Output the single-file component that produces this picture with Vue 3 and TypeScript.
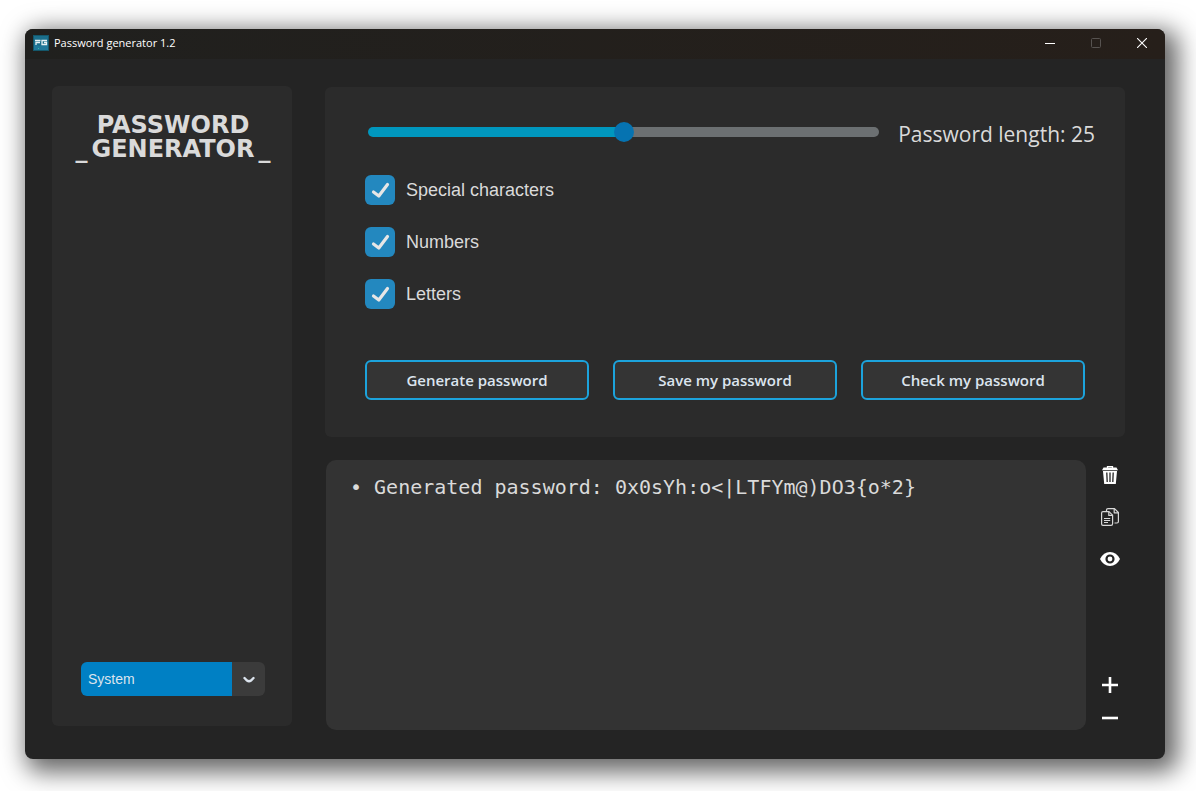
<script setup lang="ts">
import { computed, reactive, ref } from 'vue'

interface CharacterSet {
  id: string
  label: string
  enabled: boolean
}

const minLength = 0
const maxLength = 50
const length = ref<number>(25)
const theme = ref<string>('System')
const themes: string[] = ['System', 'Light', 'Dark']
const output = ref<string>('• Generated password: 0x0sYh:o<|LTFYm@)DO3{o*2}')

const sets = reactive<CharacterSet[]>([
  { id: 'special', label: 'Special characters', enabled: true },
  { id: 'numbers', label: 'Numbers', enabled: true },
  { id: 'letters', label: 'Letters', enabled: true },
])

const fill = computed<string>(
  () => `${((length.value - minLength) / (maxLength - minLength)) * 100}%`,
)
</script>

<template>
  <div class="desktop">
    <div class="window">
      <header class="titlebar">
        <svg class="app-icon" viewBox="0 0 16 16" aria-hidden="true">
          <rect width="16" height="16" fill="#14576b" />
          <rect x="1" y="1" width="14" height="14" fill="#1b6f8c" />
          <path d="M1 15V9l5 2 9-2v6z" fill="#20789a" />
          <path d="M2 5.500H7.500M3 10V7.500H7M14 5.500H9V9.500H13.500V7.500H11" fill="none" stroke="#e6f1f4" stroke-width="1.300" />
          <rect x="5" y="13" width="1" height="1" fill="#35b9a5" />
        </svg>
        <h1 class="title">Password generator 1.2</h1>
        <div class="controls">
          <button class="control" type="button" aria-label="Minimize">
            <svg viewBox="0 0 10 10"><path d="M0 5.500H10" stroke="#fff" fill="none" /></svg>
          </button>
          <button class="control" type="button" aria-label="Maximize" disabled>
            <svg viewBox="0 0 10 10"><rect x=".5" y=".5" width="9" height="9" rx="1" stroke="#575350" fill="none" /></svg>
          </button>
          <button class="control" type="button" aria-label="Close">
            <svg viewBox="0 0 10 10"><path d="M0 0L10 10M10 0L0 10" stroke="#fff" stroke-width="1.100" fill="none" /></svg>
          </button>
        </div>
      </header>

      <div class="content">
        <aside class="sidebar">
          <div class="logo">
            <div class="logo-line">PASSWORD</div>
            <div class="logo-line"><span>_</span><span>GENERATOR</span><span>_</span></div>
          </div>
          <div class="theme">
            <select v-model="theme" class="theme-select" aria-label="Appearance">
              <option v-for="name in themes" :key="name" :value="name">{{ name }}</option>
            </select>
            <svg class="theme-arrow" viewBox="0 0 12 8" aria-hidden="true">
              <path d="M1.500 2L4 4.500Q6 6 8 4.500L10.500 2" fill="none" stroke="#dce4ee" stroke-width="2.400" stroke-linecap="round" />
            </svg>
          </div>
        </aside>

        <main class="main">
          <section class="settings">
            <div class="length-row">
              <input
                id="length"
                v-model.number="length"
                class="slider"
                type="range"
                :min="minLength"
                :max="maxLength"
                :style="{ '--fill': fill }"
              />
              <label class="length-label" for="length">Password length: {{ length }}</label>
            </div>

            <div class="checks">
              <label v-for="set in sets" :key="set.id" class="check" :for="set.id">
                <span class="check-box">
                  <input :id="set.id" v-model="set.enabled" type="checkbox" />
                  <svg viewBox="0 0 30 30" aria-hidden="true">
                    <path d="M8.500 17L13.800 21L22.500 9.500" fill="none" stroke="#e6e6e6" stroke-width="3.200" stroke-linecap="round" stroke-linejoin="round" />
                  </svg>
                </span>
                <span>{{ set.label }}</span>
              </label>
            </div>

            <div class="actions">
              <button class="action" type="button">Generate password</button>
              <button class="action" type="button">Save my password</button>
              <button class="action" type="button">Check my password</button>
            </div>
          </section>

          <section class="result">
            <textarea v-model="output" class="output" aria-label="Output" readonly spellcheck="false"></textarea>
            <div class="tools">
              <button class="tool" type="button" aria-label="Clear">
                <svg viewBox="0 0 24 24">
                  <path d="M9.500 5V3.700H14.500V5" fill="none" stroke="#fff" stroke-width="1.300" />
                  <path d="M5.500 4.500H18.500L20 7.200H4Z" fill="#fff" />
                  <path d="M5 8H19L17.800 21H6.200Z" fill="#fff" />
                  <path d="M8.800 9.500L9.200 19M12 9.500V19M15.200 9.500L14.800 19" stroke="#242424" stroke-width="1.300" fill="none" />
                </svg>
              </button>
              <button class="tool" type="button" aria-label="Copy">
                <svg viewBox="0 0 24 24" fill="none" stroke="#d8d8d8" stroke-width="1.200" stroke-linejoin="round">
                  <path d="M8.500 6V5Q8.500 3.600 10 3.600H16.500L20.400 7.500V16.500Q20.400 18 19 18H16.500" />
                  <path d="M16.200 3.800V7.800H20.200" />
                  <path d="M5 6.600H11L14.600 10.200V18.800Q14.600 20.400 13 20.400H5Q3.600 20.400 3.600 19V8Q3.600 6.600 5 6.600Z" />
                  <path d="M10.800 6.800V10.400H14.400M6 13.500H12.200M6 15.500H12.200M6 17.500H10" />
                </svg>
              </button>
              <button class="tool" type="button" aria-label="Show or hide">
                <svg viewBox="0 0 24 24">
                  <path d="M2 12Q5.500 5 12 5T22 12Q18.500 19 12 19T2 12Z" fill="#fff" />
                  <circle cx="12" cy="12" r="3.500" fill="#fff" stroke="#242424" stroke-width="2.200" />
                </svg>
              </button>
              <div class="zoom-tools">
                <button class="tool" type="button" aria-label="Larger text">
                  <svg viewBox="0 0 24 24"><path d="M4 12H20M12 4V20" stroke="#fff" stroke-width="2.600" /></svg>
                </button>
                <button class="tool" type="button" aria-label="Smaller text">
                  <svg viewBox="0 0 24 24"><path d="M4 12H20" stroke="#fff" stroke-width="2.600" /></svg>
                </button>
              </div>
            </div>
          </section>
        </main>
      </div>
    </div>
  </div>
</template>

<style>
body {
  margin: 0;
  background: #fff;
}
</style>

<style scoped>
* {
  box-sizing: border-box;
}

button,
input,
select,
textarea {
  margin: 0;
  font: inherit;
}

button {
  padding: 0;
  border: 0;
  background: none;
  color: inherit;
}

svg {
  display: block;
}

.desktop {
  display: flex;
  min-height: 100vh;
  padding: 29px 31px 32px 25px;
  background: #fff;
  font-family: "Open Sans", "Noto Sans", sans-serif;
  overflow: hidden;
}

.window {
  display: flex;
  flex: 1;
  flex-direction: column;
  border-radius: 8px;
  background: #242424;
  color: #dadada;
  box-shadow: 7px 7px 24px 6px rgba(0, 0, 0, 0.6);
}

.titlebar {
  display: flex;
  align-items: center;
  height: 30px;
  padding: 0 0 2px 8px;
  border-radius: 8px 8px 0 0;
  background: linear-gradient(90deg, #20201e, #261f1a);
}

.app-icon {
  width: 16px;
  height: 16px;
}

.title {
  flex: 1;
  margin: 0 0 0 5px;
  color: #fff;
  font-size: 11px;
  font-weight: 400;
  line-height: 16px;
}

.controls {
  display: flex;
}

.control {
  display: grid;
  width: 46px;
  height: 28px;
  place-items: center;
}

.control svg {
  width: 10px;
  height: 10px;
}

.content {
  display: flex;
  flex: 1;
  gap: 33px;
  padding: 27px 40px 29px 27px;
}

.sidebar {
  display: flex;
  flex-direction: column;
  justify-content: space-between;
  width: 240px;
  margin-bottom: 4px;
  padding: 27px 18px 30px 20px;
  border-radius: 6px;
  background: #2b2b2b;
}

.logo {
  color: #dadada;
  font-family: "DejaVu Sans", sans-serif;
  font-size: 24px;
  font-weight: 700;
  line-height: 24px;
}

.logo-line {
  display: flex;
  justify-content: center;
  gap: 4px;
}

.theme {
  position: relative;
  width: 184px;
  margin-left: 9px;
}

.theme-select {
  display: block;
  width: 100%;
  height: 34px;
  padding: 0 40px 0 7px;
  border: 0;
  border-radius: 6px;
  appearance: none;
  background: linear-gradient(#3b3b3b, #3b3b3b) right / 33px 100% no-repeat #0080c4;
  color: #dce4ee;
  font-family: "Liberation Sans", sans-serif;
  font-size: 14px;
}

.theme-arrow {
  position: absolute;
  top: 14px;
  right: 10px;
  width: 12px;
  height: 8px;
  pointer-events: none;
}

.main {
  display: flex;
  flex: 1;
  flex-direction: column;
  gap: 23px;
  min-width: 0;
  padding-top: 1px;
}

.settings {
  padding: 30px 40px 37px;
  border-radius: 6px;
  background: #2b2b2b;
}

.length-row {
  display: flex;
  align-items: center;
  gap: 19px;
  height: 30px;
  margin: 0 -10px 0 3px;
}

.slider {
  flex: 1;
  min-width: 0;
  height: 10px;
  border-radius: 5px;
  appearance: none;
  background: linear-gradient(90deg, #0097be var(--fill), #6c7072 var(--fill));
}

.slider::-webkit-slider-thumb {
  width: 20px;
  height: 20px;
  border: 0;
  border-radius: 50%;
  appearance: none;
  background: #0673b1;
}

.length-label {
  padding-top: 4px;
  font-size: 21px;
  font-weight: 500;
  line-height: 30px;
  white-space: nowrap;
}

.checks {
  display: flex;
  flex-direction: column;
  align-items: flex-start;
  gap: 22px;
  margin-top: 28px;
  font-family: "Liberation Sans", sans-serif;
  font-size: 18px;
}

.check {
  display: flex;
  align-items: center;
  gap: 11px;
}

.check-box {
  display: grid;
  width: 30px;
  height: 30px;
}

.check-box > * {
  grid-area: 1 / 1;
}

.check-box input {
  width: 30px;
  height: 30px;
  border-radius: 6px;
  appearance: none;
  background: #444;
}

.check-box input:checked {
  background: #2388bf;
}

.check-box svg {
  z-index: 1;
  visibility: hidden;
  pointer-events: none;
}

.check-box input:checked + svg {
  visibility: visible;
}

.actions {
  display: grid;
  grid-template-columns: repeat(3, 1fr);
  gap: 24px;
  margin-top: 51px;
}

.action {
  height: 40px;
  border: 2px solid #1ca3dc;
  border-radius: 6px;
  background: #343434;
  color: #dce4ee;
  font-size: 15px;
  font-weight: 600;
}

.result {
  display: flex;
  flex: 1;
  gap: 12px;
  padding: 0 3px 0 1px;
}

.output {
  display: block;
  flex: 1;
  min-width: 0;
  padding: 15px 24px;
  border: 0;
  border-radius: 10px;
  outline: 0;
  resize: none;
  background: #333;
  color: #dadada;
  font-family: "DejaVu Sans Mono", monospace;
  font-size: 20px;
  line-height: 24px;
}

.tools {
  display: flex;
  flex-direction: column;
  gap: 18px;
  padding-top: 3px;
}

.tool,
.tool svg {
  width: 24px;
  height: 24px;
}

.zoom-tools {
  display: flex;
  flex-direction: column;
  gap: 9px;
  margin-top: auto;
}
</style>
